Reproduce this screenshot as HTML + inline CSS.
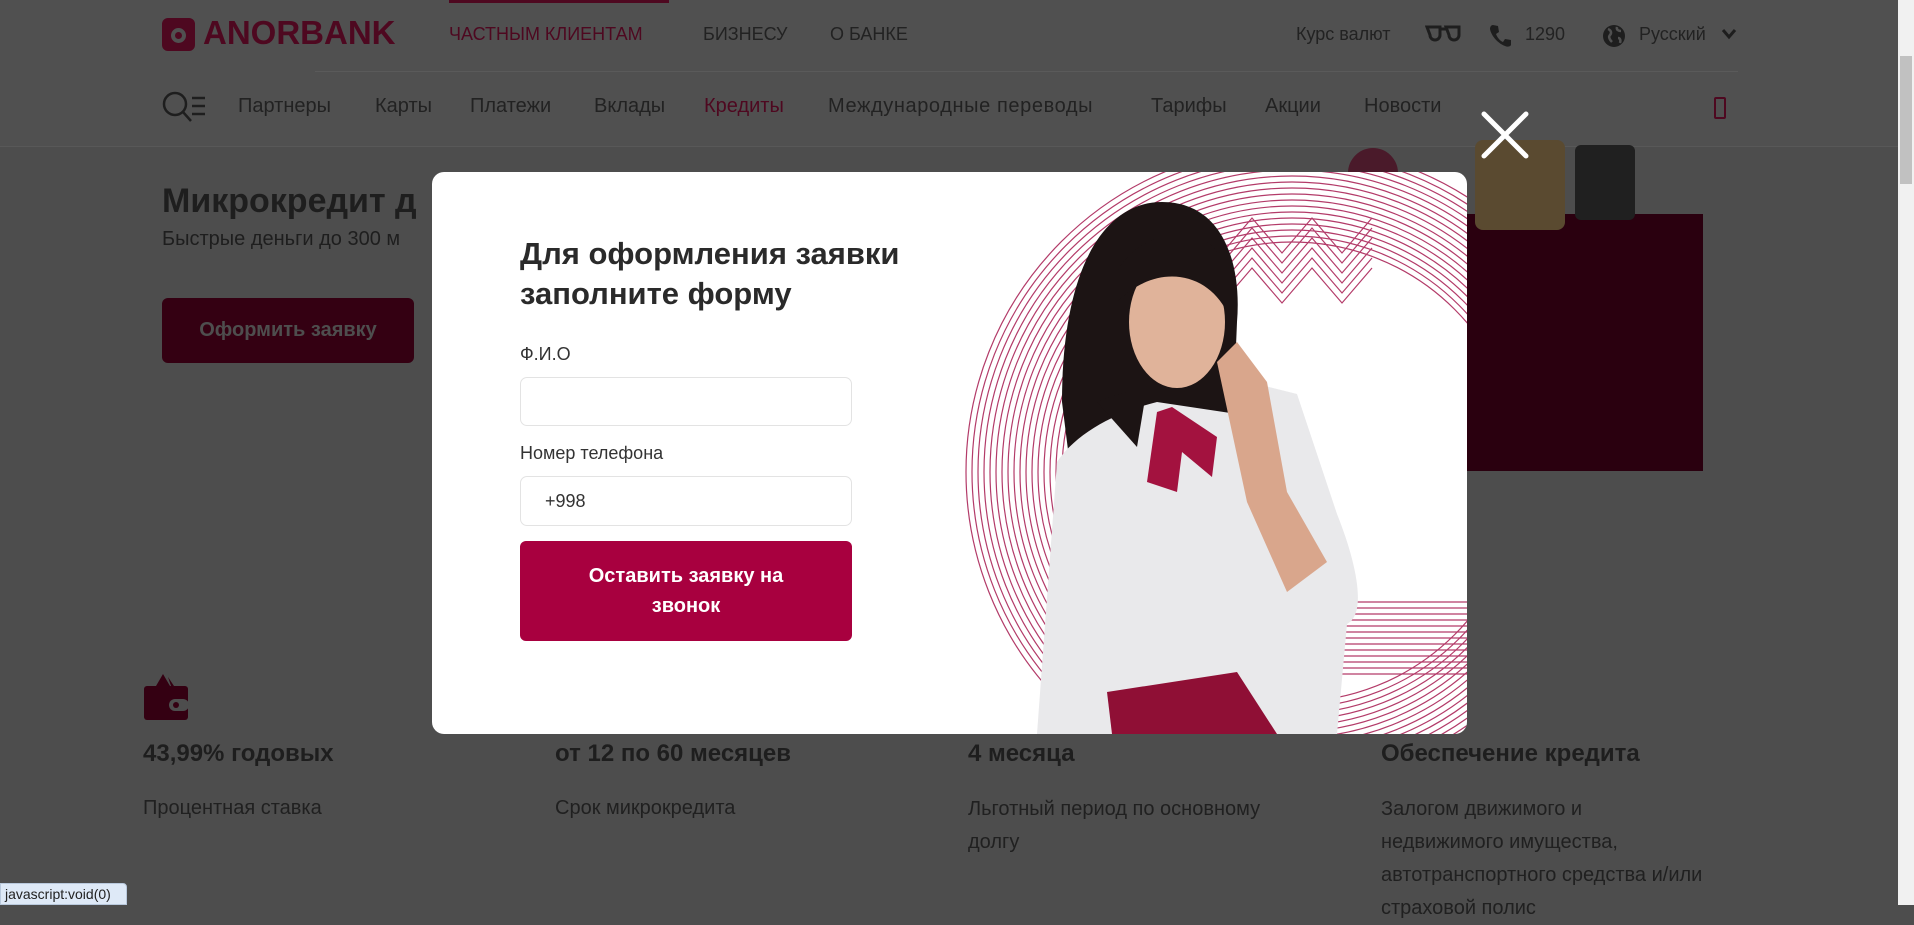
<!DOCTYPE html>
<html><head><meta charset="utf-8"><style>
*{margin:0;padding:0;box-sizing:border-box}
body{width:1914px;height:905px;overflow:hidden;background:#4d4d4d;font-family:"Liberation Sans",sans-serif;position:relative;color:#1e1e1e}
.a{position:absolute;white-space:nowrap}
.hdr{position:absolute;left:0;top:0;width:1898px;height:147px;background:#505050;border-bottom:1px solid #585858}
.n1{font-size:18px;top:24px;color:#222}
.n2{font-size:20px;top:95px;color:#222}
.m{color:#4e0820}
</style></head><body>
<div class="hdr"></div>
<div class="a" style="left:449px;top:0;width:220px;height:3px;background:#4e0820"></div>
<div class="a" style="left:315px;top:71px;width:1423px;height:1px;background:#5a5a5a"></div>
<!-- logo -->
<div class="a" style="left:162px;top:18px;width:33px;height:33px;background:#4e0820;border-radius:6px"></div>
<div class="a" style="left:171px;top:28px;width:15px;height:15px;border:4px solid #505050;border-radius:50%"></div>
<div class="a" style="left:203px;top:14px;font-size:33px;font-weight:bold;color:#4e0820">ANORBANK</div>
<div class="a n1 m" style="left:449px">ЧАСТНЫМ КЛИЕНТАМ</div>
<div class="a n1" style="left:703px">БИЗНЕСУ</div>
<div class="a n1" style="left:830px">О БАНКЕ</div>
<div class="a n1" style="left:1296px">Курс валют</div>
<svg class="a" style="left:1425px;top:24px" width="36" height="20"><g fill="none" stroke="#1e1e1e" stroke-width="3"><path d="M2 3h13v8a5 5 0 0 1-10 0zM21 3h13v8a5 5 0 0 1-10 0zM15 5h6"/></g></svg>
<svg class="a" style="left:1488px;top:23px" width="24" height="26"><path d="M5 2l5 1 1 6-3 2c1 3 4 7 7 8l2-3 6 1v5c-1 2-4 2-6 1C9 20 3 12 2 6c0-2 1-4 3-4z" fill="#1e1e1e"/></svg>
<div class="a n1" style="left:1525px">1290</div>
<svg class="a" style="left:1602px;top:24px" width="24" height="24"><circle cx="12" cy="12" r="11" fill="#1e1e1e"/><path d="M6 5c3 1 4 4 2 6s0 5 2 7M15 3c-1 3 2 4 4 4M16 14c2 0 3 2 2 5" stroke="#505050" stroke-width="2.5" fill="none"/></svg>
<div class="a n1" style="left:1639px">Русский</div>
<svg class="a" style="left:1721px;top:28px" width="16" height="12"><path d="M2 2l6 7 6-7" stroke="#1e1e1e" stroke-width="3" fill="none"/></svg>
<!-- row2 -->
<svg class="a" style="left:161px;top:90px" width="48" height="36"><circle cx="14" cy="14" r="11" stroke="#1e1e1e" stroke-width="2.5" fill="none"/><path d="M22 22l8 9M31 8h13M31 16h13M31 24h13" stroke="#1e1e1e" stroke-width="2.5"/></svg>
<div class="a n2" style="left:238px">Партнеры</div>
<div class="a n2" style="left:375px">Карты</div>
<div class="a n2" style="left:470px">Платежи</div>
<div class="a n2" style="left:594px">Вклады</div>
<div class="a n2 m" style="left:704px">Кредиты</div>
<div class="a n2" style="left:828px;letter-spacing:0.6px">Международные переводы</div>
<div class="a n2" style="left:1151px">Тарифы</div>
<div class="a n2" style="left:1265px">Акции</div>
<div class="a n2" style="left:1364px">Новости</div>
<div class="a" style="left:1714px;top:97px;width:12px;height:22px;border:2.5px solid #4e0820;border-radius:2px"></div>
<!-- hero bg -->
<div class="a" style="left:162px;top:182px;font-size:34px;font-weight:bold;color:#1e1e1e">Микрокредит д</div>
<div class="a" style="left:162px;top:228px;font-size:20px;color:#1e1e1e">Быстрые деньги до 300 м</div>
<div class="a" style="left:162px;top:298px;width:252px;height:65px;background:#340012;border-radius:6px;color:#4e4e4e;font-weight:bold;font-size:20px;text-align:center;line-height:65px">Оформить заявку</div>
<div class="a" style="left:1447px;top:214px;width:256px;height:257px;background:#2a000f"></div>
<div class="a" style="left:1475px;top:140px;width:90px;height:90px;background:#5a4a30;border-radius:8px"></div>
<div class="a" style="left:1575px;top:145px;width:60px;height:75px;background:#202020;border-radius:6px"></div>
<div class="a" style="left:1348px;top:148px;width:50px;height:40px;background:#4a1a2a;border-radius:25px 25px 0 0"></div>
<!-- features -->
<svg class="a" style="left:143px;top:674px" width="46" height="46"><path d="M20 0l-7 12h14z" fill="#340012"/><path d="M25 3l6 9h-3z" fill="#340012"/><rect x="1" y="12" width="44" height="34" rx="3" fill="#340012"/><rect x="26" y="25" width="20" height="12" rx="6" fill="#4d4d4d"/><circle cx="33" cy="31" r="3" fill="#340012"/></svg>
<div class="a" style="left:143px;top:740px;font-size:24px;font-weight:bold">43,99% годовых</div>
<div class="a" style="left:143px;top:797px;font-size:20px;color:#202020">Процентная ставка</div>
<div class="a" style="left:555px;top:740px;font-size:24px;font-weight:bold">от 12 по 60 месяцев</div>
<div class="a" style="left:555px;top:797px;font-size:20px;color:#202020">Срок микрокредита</div>
<div class="a" style="left:968px;top:740px;font-size:24px;font-weight:bold">4 месяца</div>
<div class="a" style="left:968px;top:793px;font-size:20px;color:#202020;line-height:33px">Льготный период по основному<br>долгу</div>
<div class="a" style="left:1381px;top:740px;font-size:24px;font-weight:bold">Обеспечение кредита</div>
<div class="a" style="left:1381px;top:793px;font-size:20px;color:#202020;line-height:33px">Залогом движимого и<br>недвижимого имущества,<br>автотранспортного средства и/или<br>страховой полис</div>
<!-- scrollbar -->
<div class="a" style="left:1898px;top:0;width:16px;height:905px;background:#f1f1f1"></div>
<div class="a" style="left:1900px;top:56px;width:12px;height:128px;background:#c1c1c1"></div>
<!-- modal -->
<div class="a" style="left:432px;top:172px;width:1035px;height:562px;background:#fff;border-radius:12px;overflow:hidden">
<svg style="position:absolute;left:0;top:0" width="1035" height="562">
<defs><clipPath id="c"><rect x="530" y="0" width="505" height="562"/></clipPath></defs>
<g clip-path="url(#c)" fill="none" stroke="#b33b69" stroke-width="1.2">
<circle cx="860" cy="300" r="230"/><circle cx="860" cy="300" r="236"/><circle cx="860" cy="300" r="242"/><circle cx="860" cy="300" r="248"/><circle cx="860" cy="300" r="254"/><circle cx="860" cy="300" r="260"/><circle cx="860" cy="300" r="266"/><circle cx="860" cy="300" r="272"/><circle cx="860" cy="300" r="278"/><circle cx="860" cy="300" r="284"/><circle cx="860" cy="300" r="290"/><circle cx="860" cy="300" r="296"/><circle cx="860" cy="300" r="302"/><circle cx="860" cy="300" r="308"/><circle cx="860" cy="300" r="314"/><circle cx="860" cy="300" r="320"/><circle cx="860" cy="300" r="326"/>
<path d="M760 96l30 35 30-35 30 35 30-35 30 35 30-35M760 86l30 35 30-35 30 35 30-35 30 35 30-35M760 76l30 35 30-35 30 35 30-35 30 35 30-35M760 66l30 35 30-35 30 35 30-35 30 35 30-35M760 56l30 35 30-35 30 35 30-35 30 35 30-35M760 46l30 35 30-35 30 35 30-35 30 35 30-35"/>
<path d="M850 400v-120a40 40 0 0 0-80 0v30M858 400v-120a48 48 0 0 0-96 0v30M866 400v-120a56 56 0 0 0-112 0v30M874 400v-120a64 64 0 0 0-128 0v30"/>
<path d="M785 430h260M785 436h260M785 442h260M785 448h260M785 454h260M785 460h260M785 466h260M785 472h260M785 478h260M785 484h260M785 490h260M785 496h260M785 502h260"/>
</g>
<!-- woman -->
<g transform="translate(85,0)">
<path d="M545 230c0-130 40-200 100-200s80 60 75 120l-5 120-30 30-130 10z" fill="#1c1414"/>
<ellipse cx="660" cy="150" rx="48" ry="66" fill="#e0b39a"/>
<path d="M600 100c20-40 80-50 100-20l10 60c-20-40-70-50-110-10z" fill="#1c1414"/>
<path d="M640 230c-40 10-80 30-100 60l-20 272h300l10-110c20-10 10-60-10-110l-40-120-40-10-20 30z" fill="#e9e9eb"/>
<path d="M700 190l20-20 30 40 20 110 40 70-40 30-40-90z" fill="#d9a68c"/>
<path d="M580 230c10-5 30-10 50-15l-10 60z" fill="#1c1414"/>
<path d="M640 240l15-5 45 30-5 40-30-25-5 40-30-10z" fill="#a3123f"/>
<path d="M590 520l130-20 40 62h-165z" fill="#8f0f35"/>
</g>
</svg>
<div class="a" style="left:88px;top:62px;font-size:31px;font-weight:bold;line-height:40px;color:#2a2a2a;white-space:normal;width:430px">Для оформления заявки<br>заполните форму</div>
<div class="a" style="left:88px;top:172px;font-size:18px;color:#333">Ф.И.О</div>
<div class="a" style="left:88px;top:205px;width:332px;height:49px;border:1px solid #e3e3e3;border-radius:7px"></div>
<div class="a" style="left:88px;top:271px;font-size:18px;color:#333">Номер телефона</div>
<div class="a" style="left:88px;top:304px;width:332px;height:50px;border:1px solid #e3e3e3;border-radius:7px;font-size:18px;line-height:48px;padding-left:24px;color:#333">+998</div>
<div class="a" style="left:88px;top:369px;width:332px;height:100px;background:#a8003f;border-radius:6px;color:#fff;font-weight:bold;font-size:20px;text-align:center;line-height:30px;padding-top:20px;white-space:normal">Оставить заявку на<br>звонок</div>
</div>
<!-- close -->
<svg class="a" style="left:1480px;top:110px" width="50" height="50"><path d="M4 4l42 42M46 4L4 46" stroke="#fff" stroke-width="5" stroke-linecap="round"/></svg>
<!-- status -->
<div class="a" style="left:0;top:883px;width:127px;height:22px;background:#dee9f7;border:1px solid #b9c9dd;border-radius:0 4px 0 0;font-size:14px;line-height:20px;padding-left:4px;color:#222">javascript:void(0)</div>
</body></html>
